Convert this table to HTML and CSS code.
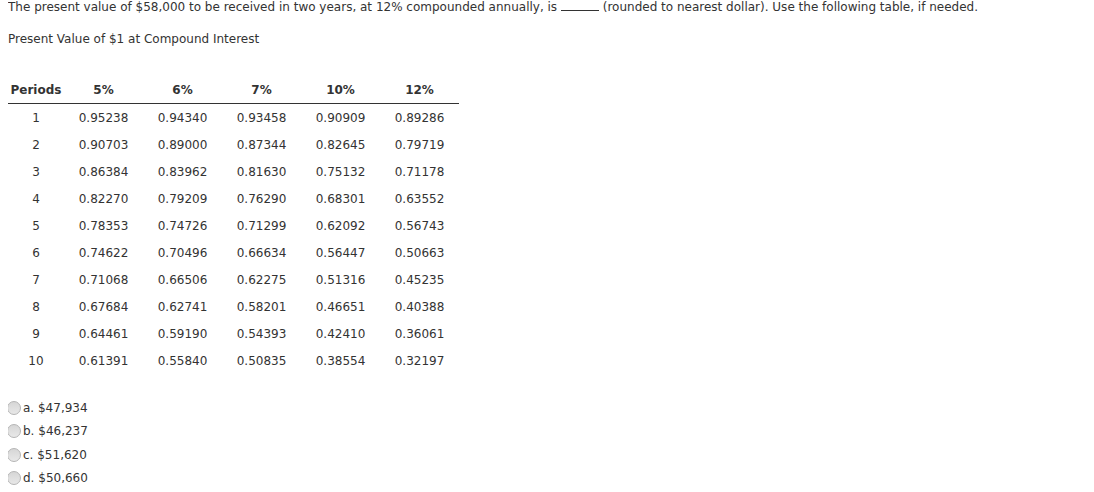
FILE: index.html
```html
<!DOCTYPE html>
<html>
<head>
<meta charset="utf-8">
<link rel="stylesheet" href="styles.css">
</head>
<body>
<p class="question">The present value of $58,000 to be received in two years, at 12% compounded annually, is <span class="blank"></span> (rounded to nearest dollar). Use the following table, if needed.</p>
<p class="caption">Present Value of $1 at Compound Interest</p>
<table class="pv">
  <colgroup>
    <col class="c-per"><col class="c-rate"><col class="c-rate"><col class="c-rate"><col class="c-rate"><col class="c-rate">
  </colgroup>
  <thead>
    <tr><th>Periods</th><th>5%</th><th>6%</th><th>7%</th><th>10%</th><th>12%</th></tr>
  </thead>
  <tbody>
    <tr><td>1</td><td>0.95238</td><td>0.94340</td><td>0.93458</td><td>0.90909</td><td>0.89286</td></tr>
    <tr><td>2</td><td>0.90703</td><td>0.89000</td><td>0.87344</td><td>0.82645</td><td>0.79719</td></tr>
    <tr><td>3</td><td>0.86384</td><td>0.83962</td><td>0.81630</td><td>0.75132</td><td>0.71178</td></tr>
    <tr><td>4</td><td>0.82270</td><td>0.79209</td><td>0.76290</td><td>0.68301</td><td>0.63552</td></tr>
    <tr><td>5</td><td>0.78353</td><td>0.74726</td><td>0.71299</td><td>0.62092</td><td>0.56743</td></tr>
    <tr><td>6</td><td>0.74622</td><td>0.70496</td><td>0.66634</td><td>0.56447</td><td>0.50663</td></tr>
    <tr><td>7</td><td>0.71068</td><td>0.66506</td><td>0.62275</td><td>0.51316</td><td>0.45235</td></tr>
    <tr><td>8</td><td>0.67684</td><td>0.62741</td><td>0.58201</td><td>0.46651</td><td>0.40388</td></tr>
    <tr><td>9</td><td>0.64461</td><td>0.59190</td><td>0.54393</td><td>0.42410</td><td>0.36061</td></tr>
    <tr><td>10</td><td>0.61391</td><td>0.55840</td><td>0.50835</td><td>0.38554</td><td>0.32197</td></tr>
  </tbody>
</table>
<ul class="options">
  <li><span class="radio"></span>a. $47,934</li>
  <li><span class="radio"></span>b. $46,237</li>
  <li><span class="radio"></span>c. $51,620</li>
  <li><span class="radio"></span>d. $50,660</li>
</ul>
</body>
</html>
```
FILE: styles.css
```css
html, body {
  background: #fff;
}
body {
  margin: 0 8px;
  font-family: "DejaVu Sans", Verdana, sans-serif;
  font-size: 12px;
  color: #333;
}
.question {
  margin: 0;
  line-height: 14px;
}
.blank {
  display: inline-block;
  width: 38px;
  border-bottom: 1px solid #333;
  vertical-align: baseline;
}
.caption {
  margin: 18px 0 0;
  line-height: 14px;
}
.pv {
  margin-top: 31px;
  border-collapse: collapse;
  table-layout: fixed;
  width: 451px;
}
.c-per { width: 56px; }
.c-rate { width: 79px; }
.pv th {
  font-weight: bold;
  height: 26px;
  padding: 0;
  text-align: center;
  border-bottom: 1px solid #333;
  vertical-align: middle;
}
.pv td {
  height: 27px;
  padding: 0;
  text-align: center;
  vertical-align: middle;
}
.options {
  list-style: none;
  margin: 22px 0 0;
  padding: 0;
}
.options li {
  display: flex;
  align-items: center;
  height: 23.5px;
  margin-left: -1px;
}
.radio {
  width: 12px;
  height: 12px;
  border-radius: 50%;
  border: 1px solid #b5b5b5;
  background: linear-gradient(#d6d6d6, #e8e8e8);
  margin-right: 2px;
  flex: none;
}
```
